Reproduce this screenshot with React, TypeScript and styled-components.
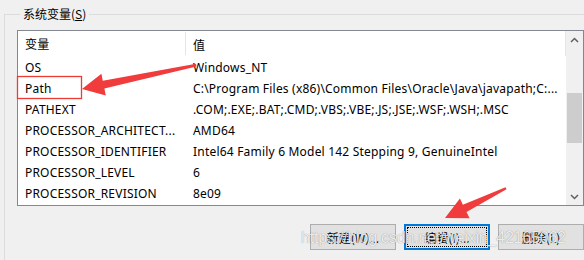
import styled, { createGlobalStyle } from "styled-components";

const GlobalStyle = createGlobalStyle`
  body {
    margin: 0;
    background: #f0f0f0;
    overflow: hidden;
    font-family: "Noto Sans", "Noto Sans CJK SC", sans-serif;
  }
`;

const rows = [
  ["OS", "Windows_NT"],
  ["Path", "C:\\Program Files (x86)\\Common Files\\Oracle\\Java\\javapath;C:..."],
  ["PATHEXT", ".COM;.EXE;.BAT;.CMD;.VBS;.VBE;.JS;.JSE;.WSF;.WSH;.MSC"],
  ["PROCESSOR_ARCHITECT...", "AMD64"],
  ["PROCESSOR_IDENTIFIER", "Intel64 Family 6 Model 142 Stepping 9, GenuineIntel"],
  ["PROCESSOR_LEVEL", "6"],
  ["PROCESSOR_REVISION", "8e09"],
];

const App = () => {
  return (
    <Page>
      <GlobalStyle />
      <GroupBox>
        <Title>
          系统变量(<u>S</u>)
        </Title>
        <ListView>
          <Table>
            <HeaderRow>
              <NameCell header>变量</NameCell>
              <ValueCell>值</ValueCell>
            </HeaderRow>
            {rows.map(([name, value]) => (
              <Row key={name}>
                <NameCell>{name}</NameCell>
                <ValueCell>{value}</ValueCell>
              </Row>
            ))}
          </Table>
          <ScrollBar>
            <ArrowBox>
              <svg width="9" height="6" viewBox="0 0 9 6">
                <polyline points="1,5 4.5,1.5 8,5" fill="none" stroke="#606060" strokeWidth="1.5" />
              </svg>
            </ArrowBox>
            <Track offset={45}>
              <Thumb />
            </Track>
            <ArrowBox>
              <svg width="9" height="6" viewBox="0 0 9 6">
                <polyline points="1,1 4.5,4.5 8,1" fill="none" stroke="#606060" strokeWidth="1.5" />
              </svg>
            </ArrowBox>
          </ScrollBar>
        </ListView>
        <ButtonRow>
          <Button>新建(W)...</Button>
          <Button focused>
            <FocusRing>编辑(I)...</FocusRing>
          </Button>
          <Button>删除(L)</Button>
        </ButtonRow>
      </GroupBox>

      <Watermark>https://blog.csdn.net/weixin_42165062</Watermark>

      <Annotations width="584" height="260" viewBox="0 0 584 260">
        <rect x="17.5" y="76.5" width="64" height="22" fill="none" stroke="#ef3b36" strokeWidth="1.3" />
        <polygon
          points="82,89 101.4,73.8 102.8,80.7 196,63.8 196.4,66.6 104.4,88.5 105.8,95.4"
          fill="#f03c3c"
        />
        <polygon
          points="445,218 459.9,198.4 462.9,204.7 505.5,187.2 506.5,189.2 466.5,211.9 469.6,218.2"
          fill="#f03c3c"
        />
      </Annotations>
    </Page>
  );
};

export default App;

const Page = styled.div`
  position: relative;
  width: 584px;
  height: 260px;
  overflow: hidden;
  background: #f0f0f0;
  padding-left: 4px;
  box-sizing: border-box;
`;

const GroupBox = styled.fieldset`
  margin: 6px 0 0 0;
  width: 640px;
  height: 300px;
  box-sizing: border-box;
  border: 1px solid #dcdcdc;
  padding: 8px 0 0 12px;
`;

const Title = styled.legend`
  margin-left: 3px;
  padding: 0 3px;
  font-size: 12px;
  line-height: 16px;
  color: #000;
  font-family: "Noto Sans CJK SC", "Noto Sans", sans-serif;

  u {
    text-underline-offset: 1px;
  }
`;

const ListView = styled.div`
  display: flex;
  width: 567px;
  height: 176px;
  box-sizing: border-box;
  border: 1px solid #828790;
  background: #fff;
`;

const Table = styled.div`
  flex: 1;
  display: flex;
  flex-direction: column;
  font-size: 12px;
  letter-spacing: 0.2px;
  color: #000;
`;

const HeaderRow = styled.div`
  display: flex;
  height: 25px;
  padding-top: 1px;
  box-sizing: border-box;
  align-items: center;
  border-right: 1px solid #e5e5e5;
  font-family: "Noto Sans CJK SC", sans-serif;
`;

const Row = styled.div`
  display: flex;
  height: 21px;
  padding-top: 1px;
  box-sizing: border-box;
  align-items: center;
`;

const NameCell = styled.div<{ header?: boolean }>`
  width: 168px;
  box-sizing: border-box;
  padding-left: 7px;
  align-self: stretch;
  display: flex;
  align-items: center;
  white-space: nowrap;
  ${({ header }) =>
    header &&
    `
    border-right: 1px solid #e5e5e5;
    margin: 0 0 1px 0;
  `}
`;

const ValueCell = styled.div`
  flex: 1;
  padding-left: 7px;
  white-space: nowrap;
  overflow: hidden;
`;

const ScrollBar = styled.div`
  width: 17px;
  display: flex;
  flex-direction: column;
  background: #f0f0f0;
`;

const ArrowBox = styled.div`
  height: 17px;
  display: flex;
  align-items: center;
  justify-content: center;
`;

const Track = styled.div<{ offset: number }>`
  flex: 1;
  padding-top: ${({ offset }) => offset}px;
`;

const Thumb = styled.div`
  height: 50px;
  margin: 0 1px;
  background: #cdcdcd;
`;

const ButtonRow = styled.div`
  width: 567px;
  display: flex;
  justify-content: flex-end;
  gap: 8px;
  margin-top: 18px;
`;

const Button = styled.div<{ focused?: boolean }>`
  width: 86px;
  height: 26px;
  box-sizing: border-box;
  display: flex;
  align-items: center;
  justify-content: center;
  background: #e1e1e1;
  border: ${({ focused }) => (focused ? "2px solid #0078d7" : "1px solid #adadad")};
  padding: ${({ focused }) => (focused ? "1px" : "0")};
  font-size: 12px;
  color: #000;
  font-family: "Noto Sans CJK SC", sans-serif;
`;

const FocusRing = styled.div`
  flex: 1;
  align-self: stretch;
  display: flex;
  align-items: center;
  justify-content: center;
  border: 1px dotted #000;
`;

const Watermark = styled.div`
  position: absolute;
  left: 301px;
  top: 229px;
  font-family: "Liberation Sans", sans-serif;
  font-size: 16px;
  letter-spacing: -0.2px;
  color: rgba(255, 255, 255, 0.85);
  text-shadow: 0 0 1px rgba(0, 0, 0, 0.45);
  white-space: nowrap;
  pointer-events: none;
`;

const Annotations = styled.svg`
  position: absolute;
  left: 0;
  top: 0;
  pointer-events: none;
`;
